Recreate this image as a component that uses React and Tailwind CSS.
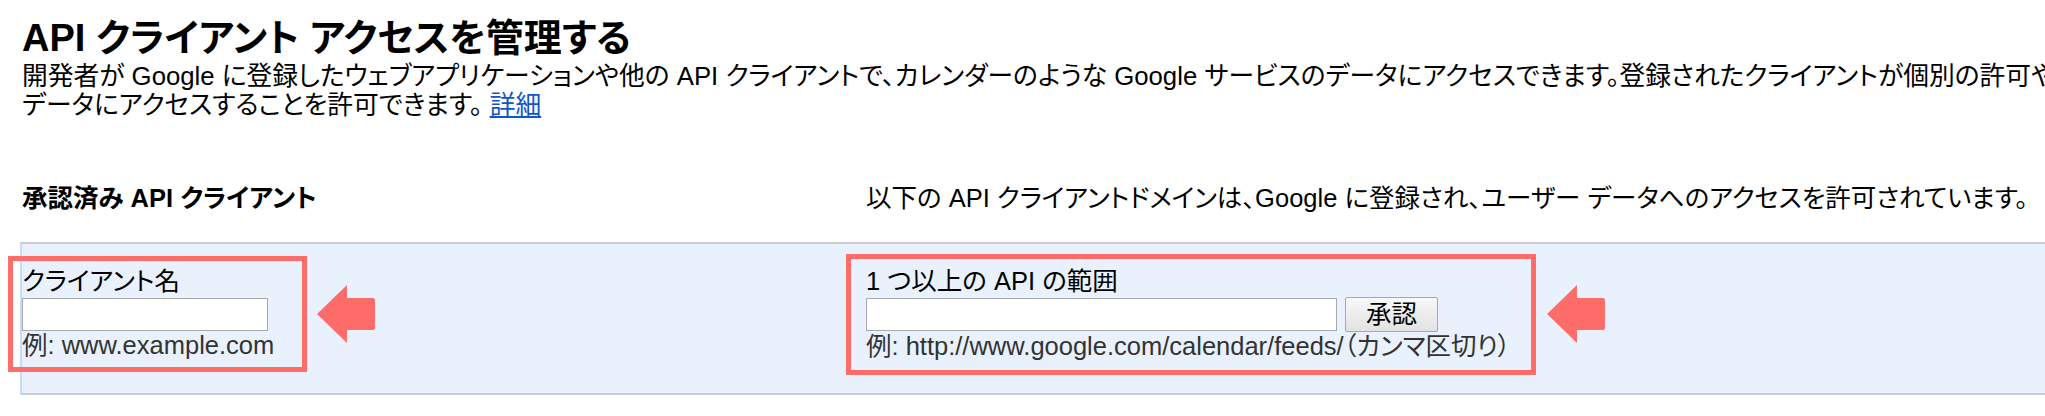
function Arrow({ className }) {
  return (
    <svg
      className={className}
      width="58"
      height="58"
      viewBox="0 0 58 58"
      aria-hidden="true"
    >
      <path
        d="M0 29 L30 0 L30 13 L56 13 Q58 13 58 15 L58 43 Q58 45 56 45 L30 45 L30 58 Z"
        fill="#ff6d6b"
      />
    </svg>
  );
}

export default function App() {
  return (
    <div className="w-full h-[416px] overflow-hidden bg-white text-black font-['Liberation_Sans','Noto_Sans_CJK_JP',sans-serif] [font-feature-settings:'palt']">
      <div className="pl-[22px] pt-[16px]">
        <h1 className="text-[38px] leading-[44px] font-bold whitespace-nowrap">
          API クライアント アクセスを管理する
        </h1>
        <div className="mt-[2px] text-[25.75px] leading-[29px]">
          <div className="whitespace-nowrap">
            開発者が Google に登録したウェブアプリケーションや他の API クライアントで、カレンダーのような Google サービスのデータにアクセスできます。登録されたクライアントが個別の許可やパスワードなしでユーザーの
          </div>
          <div className="whitespace-nowrap">
            データにアクセスすることを許可できます。{" "}
            <a href="#" className="text-[#1155cc] underline underline-offset-2">
              詳細
            </a>
          </div>
        </div>
        <div className="mt-[64px] grid grid-cols-[844px_1fr] text-[25.5px] leading-[29px]">
          <div className="font-bold whitespace-nowrap">承認済み API クライアント</div>
          <div className="whitespace-nowrap">
            以下の API クライアントドメインは、Google に登録され、ユーザー データへのアクセスを許可されています。
          </div>
        </div>
      </div>

      <div className="relative ml-[20px] mt-[29px] w-[2100px] border-l-2 border-t-2 border-b-2 border-l-[#c6dbf5] border-t-[#cccccc] border-b-[#cccccc] bg-[#e9f1fc] pt-[23px] pb-[32px]">
        <div className="grid grid-cols-[844px_1fr] text-[25.5px] leading-[29px]">
          <div>
            <div className="whitespace-nowrap">クライアント名</div>
            <input
              type="text"
              className="mt-[2px] block w-[246px] h-[33px] border border-[#a9a9a9] bg-white outline-none"
            />
            <div className="whitespace-nowrap text-[#333333]">例: www.example.com</div>
          </div>
          <div>
            <div className="whitespace-nowrap">1 つ以上の API の範囲</div>
            <div className="mt-[1px] flex h-[35px] items-center gap-[8px]">
              <input
                type="text"
                className="block w-[471px] h-[33px] border border-[#a9a9a9] bg-white outline-none"
              />
              <button
                type="button"
                className="h-[35px] w-[93px] rounded-[2px] border border-[#a8a8a8] bg-linear-to-b from-[#f8f8f8] to-[#e2e2e2] text-[25.5px] leading-[29px] text-black"
              >
                承認
              </button>
            </div>
            <div className="whitespace-nowrap text-[#333333]">
              例: http://www.google.com/calendar/feeds/（カンマ区切り）
            </div>
          </div>
        </div>

        <div className="pointer-events-none absolute left-[-14px] top-[12px] h-[116px] w-[299px] border-[5px] border-[#ff6d6b]" />
        <div className="pointer-events-none absolute left-[824px] top-[10px] h-[121px] w-[690px] border-[5px] border-[#ff6d6b]" />
        <Arrow className="pointer-events-none absolute left-[295px] top-[41px]" />
        <Arrow className="pointer-events-none absolute left-[1525px] top-[41px]" />
      </div>
    </div>
  );
}
